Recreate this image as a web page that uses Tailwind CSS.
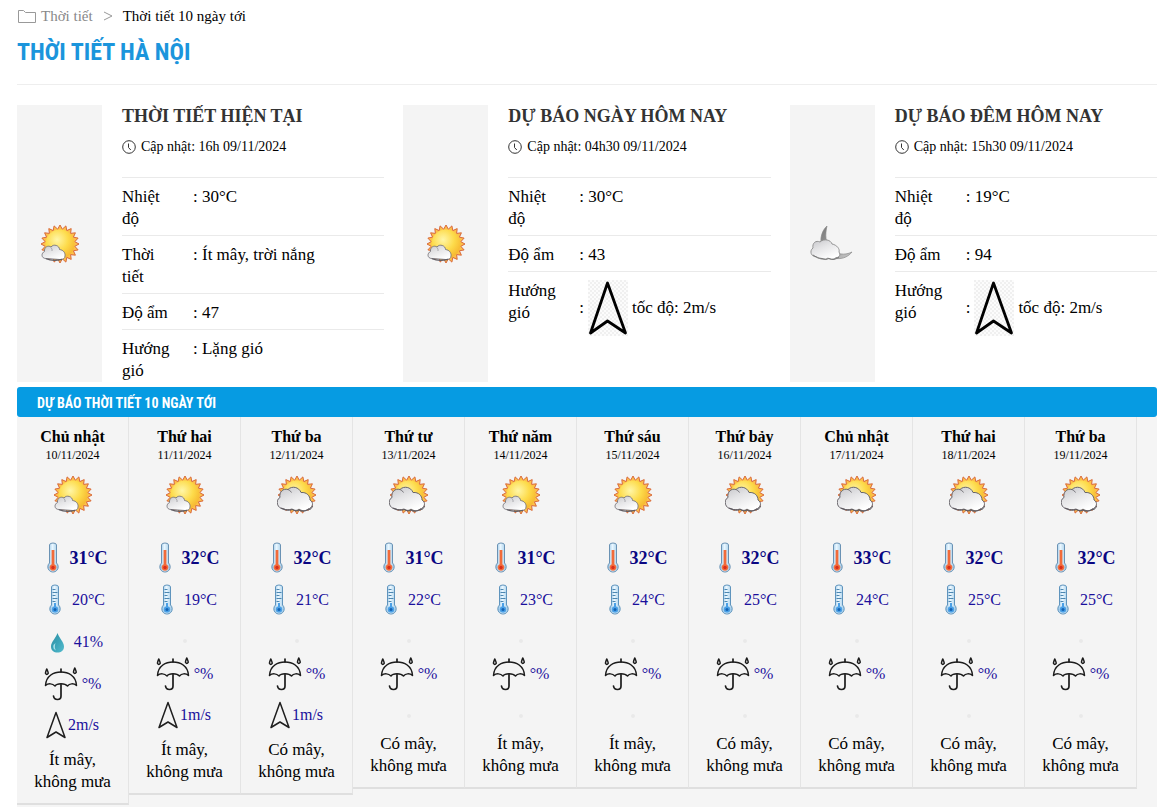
<!DOCTYPE html>
<html lang="vi">
<head>
<meta charset="utf-8">
<meta name="viewport" content="width=device-width, initial-scale=1">
<title>Thời tiết Hà Nội</title>
<script src="https://cdn.jsdelivr.net/npm/@tailwindcss/browser@4"></script>
</head>
<body class="bg-white font-['Liberation_Serif',serif] text-base text-black">
<svg class="absolute size-0" aria-hidden="true">
  <defs>
    <radialGradient id="sunFill" cx=".4" cy=".35" r=".7"><stop offset="0" stop-color="#fff6a8"/><stop offset=".55" stop-color="#fddb4a"/><stop offset="1" stop-color="#f6b52e"/></radialGradient>
    <linearGradient id="cloudFill" x1="0" y1="0" x2=".6" y2="1"><stop offset="0" stop-color="#c4c4c8"/><stop offset=".45" stop-color="#e4e4e6"/><stop offset="1" stop-color="#ffffff"/></linearGradient>
    <linearGradient id="tubeFill" x1="0" x2="1"><stop offset="0" stop-color="#8fc0e4"/><stop offset=".45" stop-color="#eaf7ff"/><stop offset="1" stop-color="#9cc8e6"/></linearGradient>
    <linearGradient id="dropFill" x1="0" x2="1" y2="1"><stop offset="0" stop-color="#2f8fa3"/><stop offset=".5" stop-color="#3aa3b8"/><stop offset="1" stop-color="#55bccd"/></linearGradient>
    <linearGradient id="moonFill" x1="0" x2="1" y2="1"><stop offset="0" stop-color="#777"/><stop offset="1" stop-color="#c8c8c8"/></linearGradient>
    <symbol id="sun" viewBox="0 0 40 40">
      <polygon id="rays" fill="#fcc04a" stroke="#d9683a" stroke-width="1"/>
      <circle cx="20" cy="20" r="14.500" fill="url(#sunFill)"/>
    </symbol>
    <symbol id="sunny" viewBox="0 0 40 40">
      <use href="#sun" width="40" height="40"/>
      <path d="M6 34.500C1 34.500 1 29 4.500 27.500C4 23 8 21 11 23C13.500 19.500 19.500 21.500 19.500 25.500C23.500 26 25.500 29 25 32C25 34.500 23 35.500 20 35.500Z" fill="url(#cloudFill)" stroke="#77757c" stroke-width=".9"/>
      <path d="M6 34.800Q13 37.500 22 35.300" fill="none" stroke="#625f65" stroke-width="1.200"/>
      <path d="M11 23.500Q12.500 25 12 27" fill="none" stroke="#9b9ba0" stroke-width=".8"/>
    </symbol>
    <symbol id="cloudy" viewBox="0 0 40 40">
      <use href="#sun" width="40" height="40"/>
      <path d="M7 34C0 34-2 25 3 22.500C2 17 6 13 11 14.500C15 10.500 22 12 24 17.500C30 17 33 21 33 25C37 27 36 33 31 34C29 36.500 24 36 22 34C20 36 17 35.500 15 34C12 35 9 35 7 34Z" fill="url(#cloudFill)" stroke="#68656b" stroke-width="1"/>
      <path d="M4 33Q10 36.500 15.500 34.500Q19 36.800 22 35Q26 37.500 31 34.800Q35 34 35.500 31" fill="none" stroke="#605c62" stroke-width="1.200"/>
      <path d="M11 14.500Q13 15 14.500 17.500" fill="none" stroke="#77757b" stroke-width="1"/>
    </symbol>
    <symbol id="night" viewBox="0 0 44 40">
      <path d="M17 2C10 8 9 20 14 27C21 37 35 37 42 28C34 32 26 30 21 25C15 19 15 10 17 2Z" fill="url(#moonFill)" stroke="#8a8a8a" stroke-width=".7"/>
      <path d="M7 33C1 33-1 27 3 24C2 19 6 16 10 18C14 14 21 16 22 20C27 21 30 25 29 28C31 31 29 34 26 33.500C24 36 20 35.500 18 34C15 36 10 35.500 7 33Z" fill="url(#cloudFill)" stroke="#8b8b8b" stroke-width=".9"/>
      <path d="M3 31Q8 35 12 34.500Q16 36.500 19 34.500Q24 37 29 33" fill="none" stroke="#777" stroke-width="1"/>
    </symbol>
    <symbol id="hot" viewBox="0 0 32 32">
      <path d="M12.500 21V3Q12.500 1 16 1T19.500 3V21A5.200 5.200 0 1 1 12.500 21Z" fill="url(#tubeFill)" stroke="#6a92b4" stroke-width="1"/>
      <path d="M14.600 8h2.800v14.200a3.400 3.400 0 1 1-2.800 0Z" fill="#f26b3a"/>
      <circle cx="16" cy="25.500" r="1.700" fill="#d92d1c"/>
    </symbol>
    <symbol id="cold" viewBox="0 0 32 32">
      <path d="M11.500 21V3Q11.500 1 15 1T18.500 3V21A5.200 5.200 0 1 1 11.500 21Z" fill="url(#tubeFill)" stroke="#5f94bd" stroke-width="1"/>
      <path d="M12.500 5.500h3M12.500 8.500h5M12.500 11.500h3M12.500 14.500h5M12.500 17.500h3" stroke="#3c7ba8" stroke-width=".9"/>
      <circle cx="15" cy="25.500" r="3.200" fill="#4ba0e6"/><circle cx="15" cy="25.500" r="1.500" fill="#1463b4"/>
      <path d="M14 19h2v5h-2z" fill="#4ba0e6"/>
    </symbol>
    <symbol id="drop" viewBox="0 0 32 32">
      <path d="M15.500 7C14 12 9 16 9 20.500C9 24.500 12 26.500 15.500 26.500S22 24.500 22 20.500C22 16 17 12 15.500 7Z" fill="url(#dropFill)"/>
      <path d="M11.500 19Q10.500 23 14 24.500Q12 21.500 13.500 17Z" fill="#a9e0e8"/>
    </symbol>
    <symbol id="umbrella" viewBox="0 0 34 34">
      <g fill="none" stroke="#1c1c1c" stroke-width="1.500" stroke-linecap="round" stroke-linejoin="round">
        <path d="M1.500 18.500C2 8.500 10 5 17 5S32 8.500 32.500 18.500C29.500 16 25.500 16.500 23.500 19C21 16 13 16 11 19C8.500 16.500 4.500 16 1.500 18.500Z"/>
        <path d="M17 2v3M17 17.500V29Q17 32.500 13.500 32.500Q10 32.500 9.500 29" stroke-width="1.700"/>
        <path d="M2.800 2C2.300 3.500 1.300 5 1.500 6.300Q2.800 8.500 4.200 6.300C4.400 5 3.300 3.500 2.800 2ZM30.800 1C30.300 2.500 29.300 4 29.500 5.300Q30.800 7.500 32.200 5.300C32.400 4 31.300 2.500 30.800 1Z"/>
      </g>
    </symbol>
    <symbol id="arrowSmall" viewBox="0 0 20 28">
      <path d="M10 1.500L19 26.500L10 21L1 26.500Z" fill="none" stroke="#1f1f1f" stroke-width="1.500" stroke-linejoin="round"/>
    </symbol>
    <pattern id="checker" width="4" height="4" patternUnits="userSpaceOnUse"><path d="M0 0h4v4H0z" fill="#fcfcfc"/><path d="M0 0h2v2H0zM2 2h2v2H2z" fill="#f0f0f0"/></pattern>
    <symbol id="arrowLarge" viewBox="0 0 40 56">
      <path d="M0 0h40v56H0z" fill="url(#checker)"/>
      <path d="M19.500 3L37.500 53L19.500 41L2.500 53Z" fill="none" stroke="#000" stroke-width="2.800" stroke-linejoin="round"/>
    </symbol>
    <symbol id="clock" viewBox="0 0 14 14">
      <circle cx="7" cy="7" r="6.300" fill="none" stroke="#333" stroke-width="1"/><path d="M6.500 3.500V7.500L8.800 10" fill="none" stroke="#333" stroke-width="1"/>
    </symbol>
  </defs>
</svg>

<main class="pl-[17px] pr-[2px]">
  <nav aria-label="Breadcrumb" class="flex h-8 items-center text-[15px]">
    <svg class="mr-1 h-[15px] w-5" viewBox="0 0 20 15" fill="none" stroke="#999" aria-hidden="true"><path d="M1.500 13.500V1.500H6.500L8.500 3.500H18.500V13.500Z"/></svg>
    <a href="#" class="text-[#888]">Thời tiết</a>
    <svg class="mx-[10px] size-[10px]" viewBox="0 0 10 10" fill="none" stroke="#999" aria-hidden="true"><path d="M1 1L9 5L1 9"/></svg>
    <a href="#">Thời tiết 10 ngày tới</a>
  </nav>
  <h1 class="h-[52px] pt-1 font-['Roboto_Condensed','Liberation_Sans_Narrow',Roboto,sans-serif] text-2xl font-bold text-[#1b95dc]">THỜI TIẾT HÀ NỘI</h1>
  <section id="today" class="grid grid-cols-3 gap-[19px] border-t border-[#eee] pt-5"></section>

  <section class="mt-[5px]">
    <h2 class="flex h-[30px] items-center rounded-[3px] bg-[#069be2] px-5 pt-[2px] font-['Roboto_Condensed','Liberation_Sans_Narrow',Roboto,sans-serif] text-sm font-bold text-white">DỰ BÁO THỜI TIẾT 10 NGÀY TỚI</h2>
    <div id="days" class="grid grid-cols-10 items-start bg-[#f5f5f5] pr-5 pb-[2px]"></div>
  </section>
</main>

<script>
const pts = [];
for (let i = 0; i < 40; i++) {
  const r = i % 2 ? 15 : 19, a = i * Math.PI / 20;
  pts.push((20 + r * Math.sin(a)).toFixed(1) + ',' + (20 - r * Math.cos(a)).toFixed(1));
}
document.getElementById('rays').setAttribute('points', pts.join(' '));

const icon = (name, cls) => `<svg class="${cls}" aria-hidden="true"><use href="#${name}"/></svg>`;
const wind = `: ${icon('arrowLarge', 'mx-1 h-14 w-10')} tốc độ: 2m/s`;
const today = [
  ['THỜI TIẾT HIỆN TẠI', '16h 09/11/2024', 'sunny', [['Nhiệt độ', ': 30°C'], ['Thời tiết', ': Ít mây, trời nắng'], ['Độ ẩm', ': 47'], ['Hướng gió', ': Lặng gió']]],
  ['DỰ BÁO NGÀY HÔM NAY', '04h30 09/11/2024', 'sunny', [['Nhiệt độ', ': 30°C'], ['Độ ẩm', ': 43'], ['Hướng gió', wind]]],
  ['DỰ BÁO ĐÊM HÔM NAY', '15h30 09/11/2024', 'night', [['Nhiệt độ', ': 19°C'], ['Độ ẩm', ': 94'], ['Hướng gió', wind]]]
];
document.getElementById('today').innerHTML = today.map(([title, time, ic, rows]) => `
  <article class="flex gap-5">
    <div class="flex w-[85px] shrink-0 items-center justify-center bg-[#f4f4f4]">${icon(ic, ic === 'night' ? 'h-10 w-11' : 'size-10')}</div>
    <div class="min-w-0 flex-1">
      <h2 class="text-lg leading-[22px] font-bold text-[#333]">${title}</h2>
      <p class="mt-[9px] mb-[19px] flex items-center gap-[5px] text-sm leading-[22px]">${icon('clock', 'size-[14px]')}Cập nhật: ${time}</p>
      <dl>${rows.map(([k, v]) => `<div class="flex border-t border-[#eaeaea] pt-2 pb-[5px] text-[17px] leading-[22px] last:pb-0"><dt class="w-[71px] shrink-0 pr-5">${k}</dt><dd class="flex flex-1 items-center self-start">${v}</dd></div>`).join('')}</dl>
    </div>
  </article>`).join('');

const days = [
  ['Chủ nhật', '10', 'sunny', 31, 20, '41%', '2m/s', 'Ít mây'],
  ['Thứ hai', '11', 'sunny', 32, 19, '', '1m/s', 'Ít mây'],
  ['Thứ ba', '12', 'cloudy', 32, 21, '', '1m/s', 'Có mây'],
  ['Thứ tư', '13', 'cloudy', 31, 22, '', '', 'Có mây'],
  ['Thứ năm', '14', 'sunny', 31, 23, '', '', 'Ít mây'],
  ['Thứ sáu', '15', 'sunny', 32, 24, '', '', 'Ít mây'],
  ['Thứ bảy', '16', 'cloudy', 32, 25, '', '', 'Có mây'],
  ['Chủ nhật', '17', 'cloudy', 33, 24, '', '', 'Có mây'],
  ['Thứ hai', '18', 'cloudy', 32, 25, '', '', 'Có mây'],
  ['Thứ ba', '19', 'cloudy', 32, 25, '', '', 'Có mây']
];
const dot = '<span class="size-1 rounded-full bg-[#e9e9e9]"></span>';
document.getElementById('days').innerHTML = days.map(([name, d, ic, hi, lo, hum, w, text]) => `
  <article class="flex flex-col items-center border-r border-b-2 border-r-[#e4e4e4] border-b-[#dfdfdf] bg-[#f4f4f4] pt-[10px] pb-[10px] text-center text-[#1a0f9c]">
    <h3 class="leading-5 font-bold text-black">${name}</h3>
    <p class="text-xs leading-4 text-black">${d}/11/2024</p>
    ${icon(ic, 'mt-3 mb-[22px] size-10')}
    <div class="flex h-[42px] items-center text-lg font-bold text-[#0a0682]">${icon('hot', 'size-8')}${hi}°C</div>
    <div class="flex h-[42px] items-center">${icon('cold', 'size-8')}${lo}°C</div>
    ${hum ? `<div class="flex h-[42px] items-center">${icon('drop', 'size-8')}${hum}</div>` : `<div class="flex h-8 items-center pt-2">${dot}</div>`}
    <div class="flex h-[42px] items-center gap-1">${icon('umbrella', 'size-[34px]')}°%</div>
    ${w ? `<div class="flex h-10 items-center gap-[2px]">${icon('arrowSmall', 'h-7 w-5')}${w}</div>` : `<div class="flex h-[34px] items-center pt-2">${dot}</div>`}
    <p class="mt-1 text-[17px] leading-[22px] text-black">${text},<br>không mưa</p>
  </article>`).join('');
</script>
</body>
</html>
